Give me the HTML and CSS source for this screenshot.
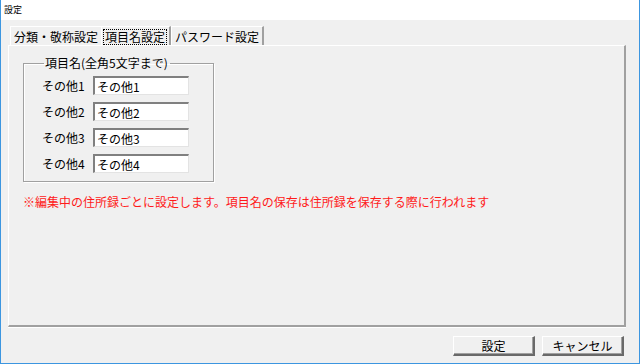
FILE: index.html
```html
<!DOCTYPE html>
<html lang="ja">
<head>
    <meta charset="UTF-8">
    <title>設定</title>
    <link rel="stylesheet" href="styles.css">
</head>
<body>
    <div class="window">
        <div class="titlebar">設定</div>
        <div class="client">
            <div class="tabs">
                <span class="tab">分類・敬称設定</span>
                <span class="tab active"><span class="focus">項目名設定</span></span>
                <span class="tab">パスワード設定</span>
            </div>
            <div class="panel">
                <fieldset class="group">
                    <legend>項目名(全角5文字まで)</legend>
                    <div class="row"><label>その他1</label><input type="text" value="その他1"></div>
                    <div class="row"><label>その他2</label><input type="text" value="その他2"></div>
                    <div class="row"><label>その他3</label><input type="text" value="その他3"></div>
                    <div class="row"><label>その他4</label><input type="text" value="その他4"></div>
                </fieldset>
                <p class="note">※編集中の住所録ごとに設定します。項目名の保存は住所録を保存する際に行われます</p>
            </div>
            <div class="buttons">
                <button>設定</button>
                <button>キャンセル</button>
            </div>
        </div>
    </div>
</body>
</html>
```

FILE: styles.css
```css
body {
    margin: 0;
    font-family: "Noto Sans CJK JP", "Noto Sans", sans-serif;
    font-size: 12px;
    color: #000;
    background: #fff;
}

.window {
    width: 640px;
    height: 364px;
    box-sizing: border-box;
    border: 1px solid #3c96e0;
    border-top: none;
    display: flex;
    flex-direction: column;
}

.titlebar {
    height: 20px;
    line-height: 20px;
    padding-left: 3px;
    font-size: 9px;
    background: #fff;
}

.client {
    flex: 1;
    background: #f0f0f0;
    padding: 0 13px 0 7px;
    display: flex;
    flex-direction: column;
}

.tabs {
    display: flex;
    height: 20px;
    margin-top: 6px;
    padding-left: 2px;
    margin-bottom: -1px;
}

.tab {
    line-height: 18px;
    padding: 1px 3px 0 3px;
    border-top: 1px solid #fff;
    border-left: 1px solid #fff;
    border-right: 2px solid #a0a0a0;
    white-space: nowrap;
}

.tab:first-child {
    border-right: none;
}

.tab.active {
    padding: 1px 2px 0 1px;
}

.focus {
    display: inline-block;
    line-height: 14px;
    padding: 0 1px;
    border: 1px dotted #000;
}

.panel {
    height: 282px;
    box-sizing: border-box;
    border-top: 1px solid #fff;
    border-left: 1px solid #fff;
    border-right: 2px solid #a0a0a0;
    border-bottom: 2px solid #a0a0a0;
    box-shadow: 0 1px #fff;
    padding: 10px 0 0 14px;
}

.group {
    width: 191px;
    height: 126px;
    box-sizing: border-box;
    margin: 0;
    padding: 6px 0 0 18px;
    border: 1px solid #a0a0a0;
    box-shadow: inset 1px 1px #fff, 1px 1px #fff;
    display: flex;
    flex-direction: column;
    gap: 7px;
}

legend {
    padding: 0 2px 0 1px;
    margin-left: 2px;
    line-height: 14px;
}

.row {
    display: flex;
    align-items: center;
    height: 19px;
}

.row label {
    width: 51px;
}

.row input {
    width: 96px;
    height: 19px;
    box-sizing: border-box;
    margin: 0;
    padding: 0 0 0 2px;
    font: inherit;
    background: #fff;
    border-top: 2px solid #808080;
    border-left: 2px solid #808080;
    border-right: 1px solid #e3e3e3;
    border-bottom: 1px solid #e3e3e3;
    outline: none;
}

.note {
    margin: 13px 0 0 0;
    line-height: 14px;
    color: #ff1a1a;
}

.buttons {
    display: flex;
    justify-content: flex-end;
    gap: 7px;
    margin-top: 9px;
    padding-right: 2px;
}

button {
    width: 82px;
    height: 20px;
    padding: 0;
    font: inherit;
    background: #f0f0f0;
    border-top: 1px solid #fff;
    border-left: 1px solid #fff;
    border-right: 2px solid #696969;
    border-bottom: 2px solid #696969;
    box-shadow: inset -1px -1px #a0a0a0;
}
```
